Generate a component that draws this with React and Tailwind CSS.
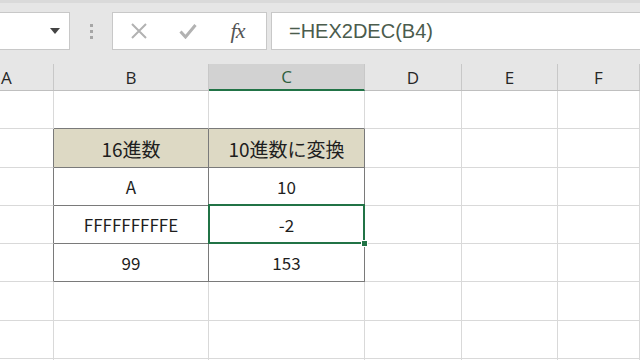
import React from 'react';

const COLS = [
    { key: 'A', w: 'w-[54px]' },
    { key: 'B', w: 'w-[155px]' },
    { key: 'C', w: 'w-[156px]' },
    { key: 'D', w: 'w-[97px]' },
    { key: 'E', w: 'w-[96px]' },
    { key: 'F', w: 'flex-1' },
];

const ROW_H = ['h-[38px]', 'h-[39px]', 'h-[38px]', 'h-[38px]', 'h-[38px]', 'h-[39px]', 'h-[38px]', 'h-[10px]'];

// sheet contents, keyed by row index (0-based under the header) then column
const CELLS = {
    1: { B: '16進数', C: '10進数に変換' },
    2: { B: 'A', C: '10' },
    3: { B: 'FFFFFFFFFE', C: '-2' },
    4: { B: '99', C: '153' },
};

const inTable = (r) => r >= 1 && r <= 4;

function Cell({ row, col }) {
    const text = CELLS[row]?.[col.key];
    const header = row === 1 && (col.key === 'B' || col.key === 'C');
    const tableCol = col.key === 'B' || col.key === 'C';
    const darkRight = inTable(row) && (col.key === 'A' || tableCol);
    const darkBottom = (row === 0 || inTable(row)) && tableCol;
    const selected = row === 3 && col.key === 'C';

    return (
        <div
            className={[
                'relative flex items-center justify-center border-r border-b shrink-0',
                col.w,
                darkRight ? 'border-r-[#7a7a7a]' : 'border-r-[#d9d9d9]',
                darkBottom ? 'border-b-[#7a7a7a]' : 'border-b-[#d9d9d9]',
                header ? 'bg-[#ddd9c4] text-[19px]' : 'bg-white text-[17px]',
            ].join(' ')}
        >
            {text && <span className="text-[#1e1e1e] leading-none">{text}</span>}
            {selected && (
                <div className="absolute z-10 -top-[2px] -left-[1px] -right-[1px] -bottom-[1px] border-2 border-[#217346]">
                    <div className="absolute -right-[5px] -bottom-[5px] w-[7px] h-[7px] bg-[#217346] border border-white" />
                </div>
            )}
        </div>
    );
}

export default function App() {
    return (
        <div
            className="w-[640px] h-[360px] overflow-hidden bg-[#e6e6e6] flex flex-col"
            style={{ fontFamily: '"Noto Sans CJK JP", "Noto Sans", sans-serif' }}
        >
            {/* formula bar */}
            <div className="h-[64px] shrink-0 border-t-[3px] border-[#dadada] flex items-start pt-[9px]">
                <div className="w-[70px] h-[38px] bg-white border border-[#c8c8c8] border-l-0 flex items-center justify-end pr-[9px]">
                    <svg width="10" height="6" viewBox="0 0 10 6">
                        <path d="M0 0h10L5 6z" fill="#444" />
                    </svg>
                </div>
                <div className="w-[42px] h-[38px] flex flex-col items-center justify-center gap-[3px]">
                    <span className="w-[3px] h-[3px] bg-[#a6a6a6]" />
                    <span className="w-[3px] h-[3px] bg-[#a6a6a6]" />
                    <span className="w-[3px] h-[3px] bg-[#a6a6a6]" />
                </div>
                <div className="w-[155px] h-[38px] bg-white border border-[#c8c8c8] flex items-center">
                    <div className="w-[50px] flex justify-center pl-[2px]">
                        <svg width="16" height="16" viewBox="0 0 16 16">
                            <path d="M1 1l14 14M15 1L1 15" stroke="#b2b2b2" strokeWidth="2" />
                        </svg>
                    </div>
                    <div className="w-[50px] flex justify-center">
                        <svg width="18" height="16" viewBox="0 0 18 16">
                            <path d="M1.5 8.5l5 5.5L16.5 2" stroke="#b2b2b2" strokeWidth="3" fill="none" />
                        </svg>
                    </div>
                    <div className="flex-1 flex justify-center pr-[4px]">
                        <span
                            className="italic text-[22px] leading-none text-[#555] tracking-[-1px]"
                            style={{ fontFamily: '"Liberation Serif", serif' }}
                        >
                            fx
                        </span>
                    </div>
                </div>
                <div className="flex-1 ml-[4px] h-[38px] bg-white border border-[#c8c8c8] border-r-0 flex items-center pl-[17px]">
                    <span
                        className="text-[20px] text-[#4b5c4d] leading-none"
                        style={{ fontFamily: '"Liberation Sans", sans-serif' }}
                    >
                        =HEX2DEC(B4)
                    </span>
                </div>
            </div>

            {/* column headers */}
            <div className="h-[27px] shrink-0 flex border-b border-[#bfbfbf] bg-[#e6e6e6]">
                {COLS.map((col) => {
                    const active = col.key === 'C';
                    return (
                        <div
                            key={col.key}
                            className={[
                                'shrink-0 flex items-center border-r border-[#c8c8c8] text-[17px] leading-none',
                                col.w,
                                col.key === 'A' ? 'justify-start pl-[1px]' : 'justify-center',
                                active
                                    ? 'bg-[#d2d2d2] text-[#2f5f3e] border-b-2 border-b-[#217346] -mb-[1px]'
                                    : 'text-[#262626]',
                            ].join(' ')}
                            style={{ fontFamily: '"Open Sans", "Noto Sans", sans-serif' }}
                        >
                            {col.key}
                        </div>
                    );
                })}
            </div>

            {/* grid */}
            <div className="flex flex-col bg-white">
                {ROW_H.map((h, r) => (
                    <div key={r} className={`flex shrink-0 ${h}`}>
                        {COLS.map((col) => (
                            <Cell key={col.key} row={r} col={col} />
                        ))}
                    </div>
                ))}
            </div>
        </div>
    );
}
